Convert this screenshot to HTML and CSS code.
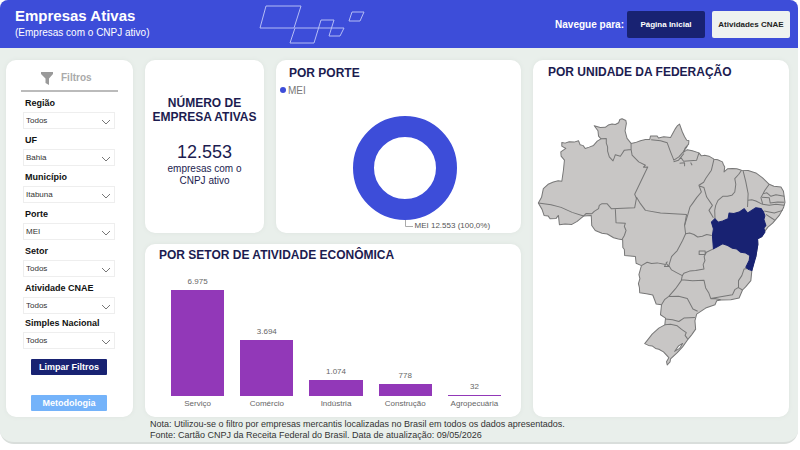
FILE: index.html
```html
<!DOCTYPE html>
<html lang="pt-BR">
<head>
  <meta charset="UTF-8" />
  <meta name="viewport" content="width=device-width, initial-scale=1.0" />
  <title>Empresas Ativas</title>
  <link rel="stylesheet" href="styles.css">
</head>
<body>
  <div class="dashboard">
    <header class="header">
      <div class="header-title">
        <h1>Empresas Ativas</h1>
        <p>(Empresas com o CNPJ ativo)</p>
      </div>
      <svg class="header-art" viewBox="258 3 108 41" aria-hidden="true">
        <path d="M266 5H301L294 27H260ZM295 27H344L340 35H329L334 19H321L314 42H290ZM352 11H364L360 20H349Z" />
      </svg>
      <nav class="header-nav">
        <span>Navegue para:</span>
        <a class="nav-link nav-link-dark" href="#inicio">Página Inicial</a>
        <a class="nav-link" href="#cnae">Atividades CNAE</a>
      </nav>
    </header>

    <main class="content">
      <aside class="card sidebar">
        <h2 class="sidebar-title">
          <svg class="funnel" viewBox="0 0 12 13" aria-hidden="true"><path d="M0 0H12V2L8 6.500V13L4.500 11V6.500L0 2Z" /></svg>
          Filtros
        </h2>
        <form class="filters">
          <div class="filter">
            <label for="regiao">Região</label>
            <div class="select-box">
              <select id="regiao"><option>Todos</option></select>
              <svg viewBox="0 0 10 6" aria-hidden="true"><path d="M1 1L5 5L9 1" /></svg>
            </div>
          </div>
          <div class="filter">
            <label for="uf">UF</label>
            <div class="select-box">
              <select id="uf"><option>Bahia</option></select>
              <svg viewBox="0 0 10 6" aria-hidden="true"><path d="M1 1L5 5L9 1" /></svg>
            </div>
          </div>
          <div class="filter">
            <label for="municipio">Município</label>
            <div class="select-box">
              <select id="municipio"><option>Itabuna</option></select>
              <svg viewBox="0 0 10 6" aria-hidden="true"><path d="M1 1L5 5L9 1" /></svg>
            </div>
          </div>
          <div class="filter">
            <label for="porte">Porte</label>
            <div class="select-box">
              <select id="porte"><option>MEI</option></select>
              <svg viewBox="0 0 10 6" aria-hidden="true"><path d="M1 1L5 5L9 1" /></svg>
            </div>
          </div>
          <div class="filter">
            <label for="setor">Setor</label>
            <div class="select-box">
              <select id="setor"><option>Todos</option></select>
              <svg viewBox="0 0 10 6" aria-hidden="true"><path d="M1 1L5 5L9 1" /></svg>
            </div>
          </div>
          <div class="filter">
            <label for="atividade">Atividade CNAE</label>
            <div class="select-box">
              <select id="atividade"><option>Todos</option></select>
              <svg viewBox="0 0 10 6" aria-hidden="true"><path d="M1 1L5 5L9 1" /></svg>
            </div>
          </div>
          <div class="filter">
            <label for="simples">Simples Nacional</label>
            <div class="select-box">
              <select id="simples"><option>Todos</option></select>
              <svg viewBox="0 0 10 6" aria-hidden="true"><path d="M1 1L5 5L9 1" /></svg>
            </div>
          </div>
          <div class="actions">
            <button type="reset" class="btn">Limpar Filtros</button>
            <button type="button" class="btn btn-light">Metodologia</button>
          </div>
        </form>
      </aside>

      <section class="card total">
        <h2>NÚMERO DE EMPRESA ATIVAS</h2>
        <p class="total-value">12.553</p>
        <p class="total-label">empresas com o CNPJ ativo</p>
      </section>

      <section class="card size">
        <h2>POR PORTE</h2>
        <p class="legend"><span class="dot"></span>MEI</p>
        <div class="donut-chart">
          <svg class="donut" viewBox="0 0 104 104" role="img" aria-label="MEI 100,0%"><circle cx="52" cy="52" r="41.500" /></svg>
          <div class="donut-label">
            <svg viewBox="0 0 8 8" aria-hidden="true"><path d="M0.500 0V6.500H8" /></svg>
            <span>MEI 12.553 (100,0%)</span>
          </div>
        </div>
      </section>

      <section class="card sector">
        <h2>POR SETOR DE ATIVIDADE ECONÔMICA</h2>
        <div class="bars">
          <div class="bar-item">
            <span>6.975</span>
            <div class="bar" style="height: 106px"></div>
            <span class="bar-name">Serviço</span>
          </div>
          <div class="bar-item">
            <span>3.694</span>
            <div class="bar" style="height: 56px"></div>
            <span class="bar-name">Comércio</span>
          </div>
          <div class="bar-item">
            <span>1.074</span>
            <div class="bar" style="height: 16px"></div>
            <span class="bar-name">Indústria</span>
          </div>
          <div class="bar-item">
            <span>778</span>
            <div class="bar" style="height: 12px"></div>
            <span class="bar-name">Construção</span>
          </div>
          <div class="bar-item">
            <span>32</span>
            <div class="bar" style="height: 1px"></div>
            <span class="bar-name">Agropecuária</span>
          </div>
        </div>
      </section>

      <section class="card states">
        <h2>POR UNIDADE DA FEDERAÇÃO</h2>
        <svg class="map" viewBox="533 112 255 258" role="img" aria-label="Mapa do Brasil com a Bahia em destaque">
          <!-- country -->
          <path d="M561.700 142.300L565 143L569 141.700L574 142L578.300 140.700L580 144.700L583 145.500L585 148.300L589 147L593.300 145.300L597 141L600.700 138.700L598.300 136L597.700 130.700L594 125.700L600 127.500L605 127.300L608 125L611.700 124L615 124.500L618.300 122.700L619.500 119.500L621.700 118.700L625.500 120.500L626 123.300L624.700 130.700L626.700 138.300L630.700 143.300L635 142.500L640 140.700L645 139.500L649.300 139.300L650 136L656.700 136L658 138L663.300 136.700L670 137.300L675 128.300L677 125.500L679 124L681.700 131.700L684 136.700L686 140L688.300 140.700L688 144L684.500 148L683 152L686.700 149.500L691.700 150.700L698.300 152.700L700.700 155.700L704 155L708.300 156L713.300 159L717 159.500L721.700 161.700L722.500 164L724 166.700L723.300 171.700L727 168.500L731.700 168.300L736 168.500L740.700 170L747.300 170.300L755 172.700L761.700 177.700L768.300 184L773 186L780 186.700L782.500 191L783.300 196.700L784 202L782.500 207.500L778.300 215L771.700 222.700L767 226.700L763.300 231.700L761 236L756.700 238.300L757 244L756 250L755 256L753.300 260L751 270L750 280L745 286L741.700 289.300L738.300 297.300L730 299L720 299.300L716 300L714.300 304L705 307.300L696 313.300L694.300 320L695 328.300L691 334L686.700 339.300L682 346L676.700 351.700L670 358L669.500 361L666.700 364L666 360.700L668.300 356.700L663 351L658.300 348.300L655 347.500L651.700 345L648 344.500L644.300 342.700L651.700 333.300L658.300 327.300L664.300 324L665 317.300L660 314L661 304L655.700 303.300L652.300 294.300L646 293L639.300 292L639 287L638 283L639.500 278L638.500 274L641 265L635.700 262.700L635 256L624.300 255L624 249L622.500 247L622.300 239.300L618 238.500L613.300 237.300L607 233.500L601.700 232.700L595 230L591.500 225L591 215L583.300 215.700L577 221L571.700 224L565 223.500L559.300 224.300L558.300 215L556 218L550 218.300L548 215.500L544 215L542 209L538.300 202.700L541.500 197L543.300 188.300L548 184L553.300 181.700L558 180.500L561.700 181L563.300 170L564.300 160L561 156L560.700 151.700L565.700 148.300L561.700 146Z" />
          <!-- state borders -->
          <path class="border" d="M538.300 202.700L551 204.500L561 207L572 212L583.300 215.700L586 213L591.700 213.300L594 211L598.300 208.300L599 205L601.700 203.300L606.700 203.300L611 208.300L634.300 207.300L636 198L634.300 194L647.300 166.700L643 167L645 165L638.300 161.700L631.700 155L630.700 149.300L624 150L622 153L620 156L615 154.500L614 157.500L612.700 160.700L609 156.700L607.300 151L607.300 146.700L606 143L606 138.300L600.700 138.700M630.700 149.300V143.300M636 196.700L640 203.300L645 210L660 212.700L686 214M615 208.300L615.700 222.300L625 222.700L624 226L625.700 230L624 235L621.700 239" />
          <path class="border" d="M650.700 139.700L660 140.700L666.700 142.700L670 151.700L673.300 160L678.300 156.700L682.700 151.700L686.700 146M683.300 153.300L678 160L673 161.500M680 157L683 161L696 160L698.300 152.700M679 163L684 162.500L684 166M690 162.300L691.500 165M713.300 159L710.700 170L705 178.300L703 182L698.300 185L700.700 191.700L696 197.300L692 203L689.300 206.700L687.300 214L684 225L685 233.300L689 232.500L693.300 234L697 236.500L701.700 235.700L706 234L711 235M698 185.500L703.300 187.300L706 196.700L711.700 205L708.300 210L712.700 217.300" />
          <path class="border" d="M740.700 170L738 174L734 178.300L735 184L734 191.700L731 195L726.700 196L722 196L717.300 200L715 205L714 210L714.300 218.300M742.300 170.700L745 181.700L747.300 193.300L746.700 206.700M768.300 184L764 190L760 197.300L761.700 203.300M747.300 200L751 199.500L755 200.700L761.700 204L768.300 205L775 204L783.300 205M763.300 210.700L773.300 212.700L781.700 210M762.700 193.300L766 192.500L770 196L775 194.500L783.300 196M761 197L768.300 197.300L769.300 202.700L776.700 201.700L783.300 202M765 214L771.700 218.300L774 220" />
          <path class="border" d="M686 214L684 225M685 233.300L682 240L676.700 250L671 256L668.300 265L671 269.300L676 272L681.700 275L683.300 272.700L689 270.500L695 270L703.300 268.300L702.500 264L704.300 260L703.500 256L705.700 251.700L712.700 248.300M641 265L646.700 261.700L651 263L656.700 262.300L665 264L664 266L668.300 266L665.500 262.500L667 261M698.500 250.500H704.500V254H698.500ZM681.700 275L680.700 280L675 288L668.300 295.700L664 299L661 304M681 279L692 280L703.300 279.500L705 287.300L708 292L710 297.700L720 296L731.700 294L734 289L737.700 286.700V280L741 275L743.300 268.300L747 268M737.700 287L741.700 289.300M710 298L715 298L720 299M668.300 295.700L678 295.500L686.700 297.700L689.500 303L692.300 308.300L697 310.500M665 318.300L672 319L678.300 320.700L683.300 317.300L694.300 316.700M664.300 324L670 323.500L676.700 325L681 328.500L685.700 331.700L684.500 334.500L687 338" />
          <path class="lagoon" d="M682 342.500L678 345L674 350.500L679 347.500Z" />
          <path class="bahia" d="M710.700 221.700L714.300 218.300L717.300 221.700L722 220.500L727.300 218.300L728.300 212.700L733 213L738.300 211.700L743.300 208.300L746.700 212.700L750 210.500L755 207.300L760 208L762.700 211.700L764 215.500L763 219L765 225L763 227.500L764 231.700L761 236L756.700 238.300L757 244L756 250L755 256L753.300 262L751 270L748 269L745 266.700L748.300 260L749 255L745 252.500L740 251.700L736 248.500L731.700 247.700L727 245L721.700 243.300L717 246L712.700 248.300L711.700 235L712.700 228.300Z" />
        </svg>
      </section>
    </main>

    <footer class="notes">
      <p>Nota: Utilizou-se o filtro por empresas mercantis localizadas no Brasil em todos os dados apresentados.</p>
      <p>Fonte: Cartão CNPJ da Receita Federal do Brasil. Data de atualização: <time datetime="2026-05-09">09/05/2026</time></p>
    </footer>
  </div>
</body>
</html>
```
FILE: styles.css
```css
* {
  margin: 0;
  padding: 0;
  box-sizing: border-box;
}

body {
  font-family: "Liberation Sans", Arial, sans-serif;
  background: #fff;
  padding-right: 2px;
}

.dashboard {
  background: #e9efeb;
  border-radius: 8px 8px 14px 14px;
  border-bottom: 2px solid #d9dedb;
  overflow: hidden;
}

.header {
  display: grid;
  grid-template-columns: 243px 108px 1fr;
  align-items: center;
  height: 48px;
  padding: 0 8px 0 15px;
  background: #3d4dd9;
  color: #fff;
}

.header h1 {
  font-size: 15px;
  line-height: 18px;
}

.header-title p {
  font-size: 10px;
  line-height: 16px;
}

.header-art {
  width: 108px;
  height: 41px;
}

.header-art path {
  fill: none;
  stroke: #b5bdf5;
  stroke-width: 1;
}

.header-nav {
  display: flex;
  justify-content: flex-end;
  align-items: center;
  font-size: 10px;
  font-weight: bold;
}

.nav-link {
  width: 78px;
  margin-left: 7px;
  border-radius: 2px;
  background: #eef2f0;
  color: #222;
  font-size: 8px;
  line-height: 27px;
  text-align: center;
  text-decoration: none;
}

.nav-link-dark {
  margin-left: 3px;
  background: #182272;
  color: #fff;
}

.content {
  display: grid;
  grid-template-columns: 127fr 119fr 245fr 256fr;
  grid-template-rows: 173px auto;
  grid-template-areas:
    "sidebar total size states"
    "sidebar sector sector states";
  gap: 11px 12px;
  padding: 12px 9px 0 6px;
}

.card {
  border-radius: 10px;
  background: #fff;
  box-shadow: 0 0 4px #dde4df;
}

.card h2 {
  color: #1c1c50;
  font-size: 12px;
  line-height: 14px;
}

.sidebar {
  grid-area: sidebar;
  padding: 6px 15px 5px;
}

.card .sidebar-title {
  display: flex;
  align-items: center;
  gap: 8px;
  height: 26px;
  margin-bottom: 2px;
  padding-left: 20px;
  border-bottom: 2px solid #bbb;
  color: #aaa;
  font-size: 10px;
}

.funnel {
  width: 12px;
  height: 13px;
  fill: #9a9a9a;
}

.filters {
  padding: 0 3px 0 2px;
}

.filter {
  margin-bottom: 2px;
}

.filter:nth-child(6) {
  margin-bottom: 0;
}

.filter label {
  display: block;
  padding-left: 2px;
  color: #111;
  font-size: 9px;
  font-weight: bold;
  line-height: 18px;
}

.select-box {
  display: grid;
  align-items: center;
}

.select-box select,
.select-box svg {
  grid-area: 1 / 1;
}

.select-box select {
  appearance: none;
  width: 100%;
  height: 17px;
  padding-left: 2px;
  border: 1px solid #eee;
  background: #fff;
  color: #333;
  font-family: inherit;
  font-size: 8px;
}

.select-box svg {
  justify-self: end;
  width: 10px;
  height: 6px;
  margin: 2px 4px 0 0;
  fill: none;
  stroke: #777;
  pointer-events: none;
}

.actions {
  display: grid;
  gap: 20px;
  padding: 8px 8px 0;
}

.btn {
  height: 16px;
  border: none;
  border-radius: 1px;
  background: #182272;
  color: #fff;
  font-family: inherit;
  font-size: 9px;
  font-weight: bold;
  cursor: pointer;
}

.btn-light {
  background: #74b3fa;
}

.total {
  grid-area: total;
  padding: 36px 4px 0;
  color: #1c1c50;
  text-align: center;
}

.total-value {
  margin-top: 17px;
  font-size: 18px;
  line-height: 22px;
}

.total-label {
  padding: 0 18px;
  font-size: 10px;
  line-height: 12px;
}

.size {
  grid-area: size;
  padding: 6px 4px 0;
}

.size h2 {
  padding-left: 9px;
}

.legend {
  display: flex;
  align-items: center;
  gap: 2px;
  height: 20px;
  color: #777;
  font-size: 10px;
}

.dot {
  width: 6px;
  height: 6px;
  border-radius: 50%;
  background: #3d4dd9;
}

.donut-chart {
  display: grid;
  grid-template-columns: 1fr 1fr;
  padding: 16px 0 0 12px;
}

.donut {
  grid-column: 1 / 3;
  justify-self: center;
  width: 104px;
  height: 104px;
}

.donut circle {
  fill: none;
  stroke: #3d4dd9;
  stroke-width: 21;
}

.donut-label {
  display: flex;
  grid-column: 2;
  gap: 2px;
  color: #555;
  font-size: 8px;
  line-height: 12px;
  white-space: nowrap;
}

.donut-label svg {
  width: 8px;
  height: 8px;
  fill: none;
  stroke: #aaa;
}

.sector {
  grid-area: sector;
  padding: 4px 14px 5px;
}

.bars {
  display: grid;
  grid-template-columns: repeat(5, 1fr);
  align-items: end;
  gap: 16px;
  height: 146px;
  margin-top: 4px;
  padding-left: 12px;
  padding-right: 6px;
}

.bar-item {
  color: #666;
  font-size: 8px;
  line-height: 16px;
  text-align: center;
}

.bar {
  background: #9238b8;
}

.bar-name {
  white-space: nowrap;
}

.states {
  grid-area: states;
  padding: 5px 0 0;
}

.states h2 {
  padding-left: 15px;
}

.map {
  display: block;
  width: 100%;
  margin-top: 33px;
}

.map path {
  fill: #c8c6c5;
  stroke: #777;
  stroke-width: 1;
  stroke-linejoin: round;
}

.map .border {
  fill: none;
}

.map .lagoon {
  fill: #fff;
}

.map .bahia {
  fill: #182272;
  stroke: #182272;
}

.notes {
  padding: 2px 150px 1px;
  color: #333;
  font-size: 9px;
  line-height: 11px;
}
```
